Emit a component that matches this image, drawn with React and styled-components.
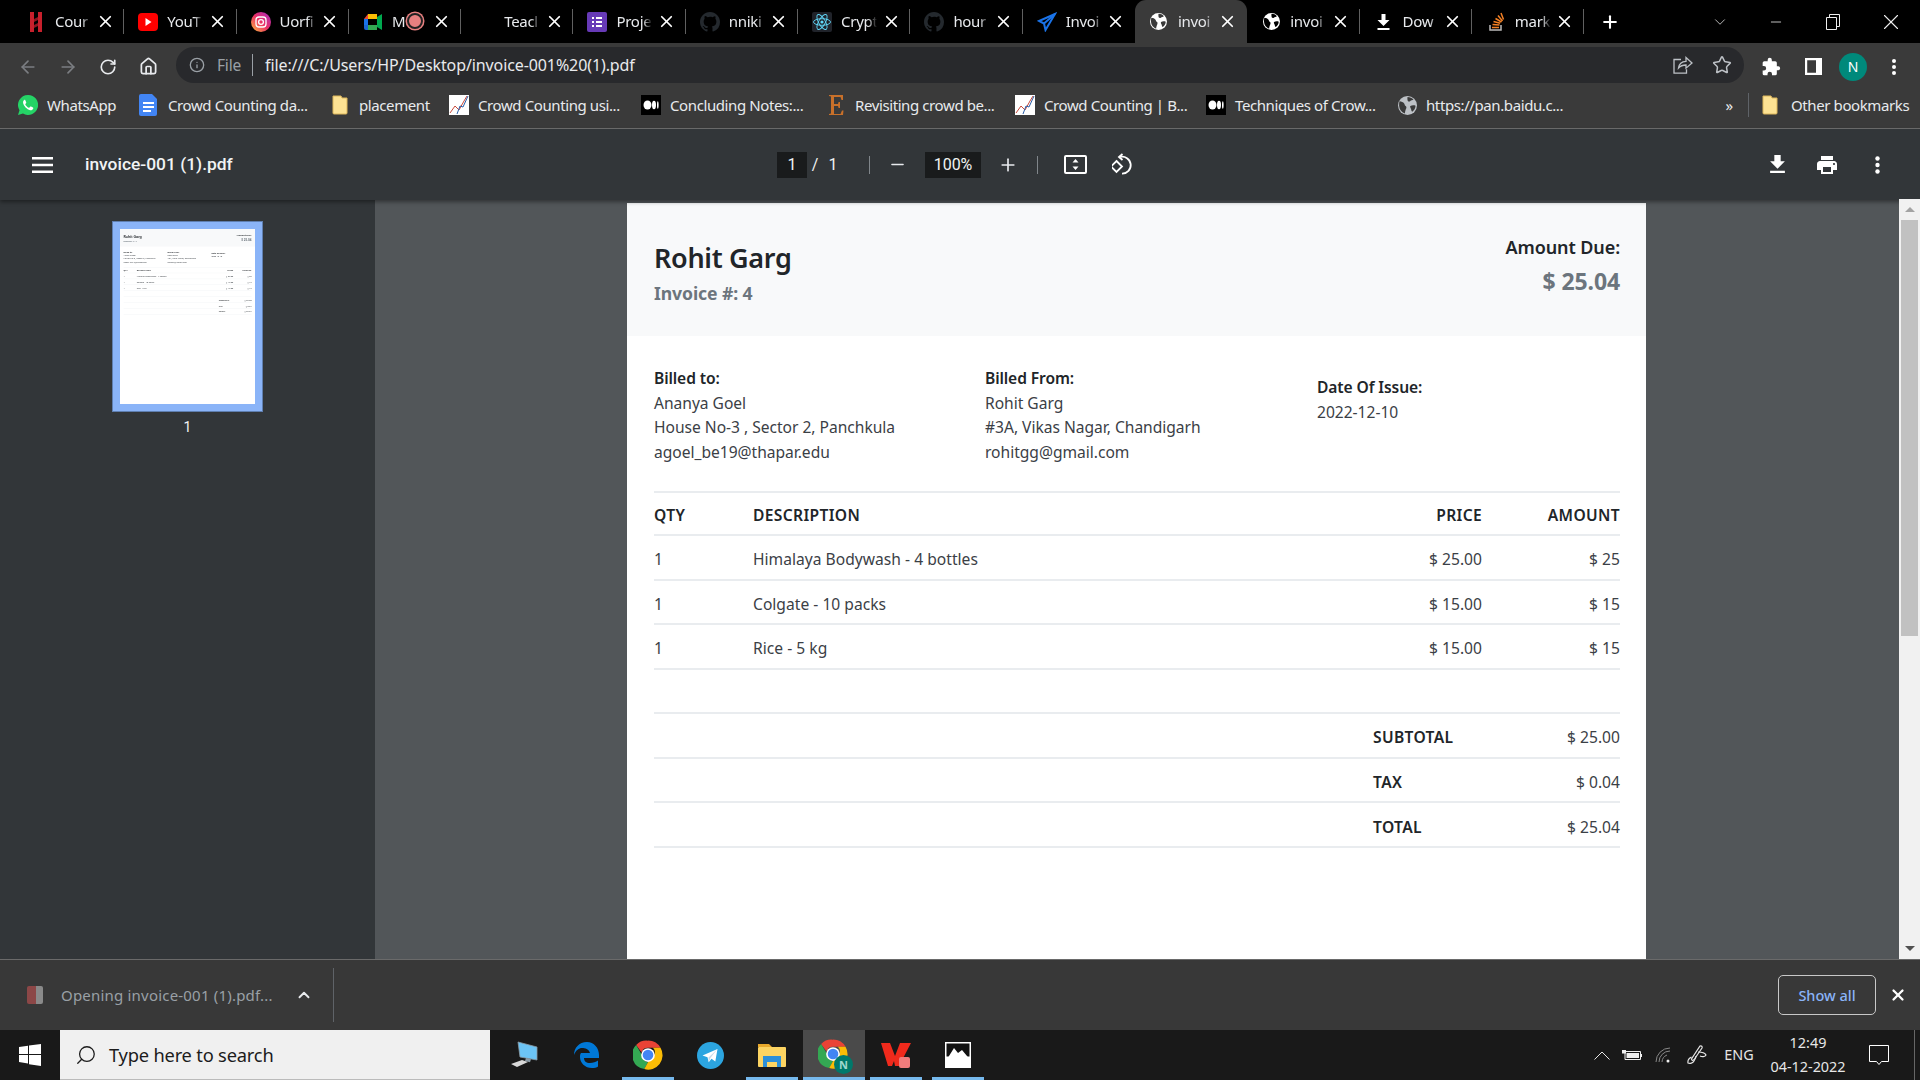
import React from "react";
import styled, { createGlobalStyle } from "styled-components";
import {
  ArrowLeft,
  ArrowRight,
  RotateCw,
  Home,
  Info,
  Star,
  Minus,
  Plus,
  ChevronUp,
  ChevronDown,
  Search,
  X,
} from "lucide-react";

const UI_FONT = `"Noto Sans", "Open Sans", Arial, sans-serif`;
const PDF_FONT = `Roboto, Arial, sans-serif`;

const GlobalStyle = createGlobalStyle`
  html, body { margin: 0; padding: 0; height: 100%; background: #000; overflow: hidden; }
  * { box-sizing: border-box; }
  body { font-family: ${UI_FONT}; }
`;

/* ---------- drawn icons ---------- */

const Globe = ({ size = 17, color = "#fff", land = "#3a3a3a" }) => (
  <svg width={size} height={size} viewBox="0 0 20 20">
    <circle cx="10" cy="10" r="10" fill={color} />
    <path d="M1.500 5.500c2.200.1 4 .9 5 2.300.8 1.100.4 1.900 1.500 2.600 1 .7 1.100 1.700.5 3-.5 1-1 2.600-1.300 5C3.500 17 1.500 14 1.200 10.500 1.100 8.700 1.200 7 1.500 5.500zM10 1c2.500 0 4.800 1 6.300 2.700-1.200.8-2.500.7-3.300 1.600-.8.900-2.100.7-2.600 0C9.900 4.500 9.800 2.700 10 1zM13 10.500c1.500-.8 3.800-.9 5.500-.3-.2 2.700-1.400 4.800-3.500 6.300-1.300-1-.9-2.700-1.700-3.700-.4-.8-.8-1.700-.3-2.300z" fill={land} />
  </svg>
);

const GitHubMark = ({ size = 19, color = "#24292e" }) => (
  <svg width={size} height={size} viewBox="0 0 16 16">
    <path fill={color} d="M8 0C3.580 0 0 3.580 0 8c0 3.540 2.290 6.530 5.470 7.590.4.070.55-.17.55-.38 0-.19-.010-.82-.010-1.490-2.010.370-2.530-.490-2.690-.940-.090-.230-.480-.940-.820-1.130-.280-.150-.680-.520-.010-.530.630-.010 1.080.580 1.230.820.720 1.210 1.870.870 2.330.660.070-.520.280-.870.510-1.070-1.780-.200-3.640-.890-3.640-3.950 0-.870.310-1.590.820-2.150-.080-.200-.360-1.020.080-2.120 0 0 .670-.210 2.200.820A7.600 7.600 0 0 1 8 3.870c.680 0 1.360.090 2 .270 1.530-1.040 2.200-.820 2.200-.820.440 1.100.160 1.920.080 2.120.510.560.820 1.270.820 2.150 0 3.070-1.870 3.750-3.650 3.950.290.250.540.730.540 1.480 0 1.070-.010 1.930-.010 2.200 0 .210.150.460.550.380A8.010 8.010 0 0 0 16 8c0-4.420-3.580-8-8-8z" />
  </svg>
);

const ChromeLogo = ({ size = 30 }) => (
  <svg width={size} height={size} viewBox="0 0 48 48">
    <path d="M24 1a23 23 0 0 1 20 11.500H24a11.500 11.500 0 0 0-10.500 7L5 7.800A23 23 0 0 1 24 1z" fill="#ea4335" />
    <path d="M5 7.800l9.800 17A10.500 10.500 0 0 0 24 35.500L18 46.500A23 23 0 0 1 5 7.800z" fill="#34a853" />
    <path d="M44 12.500a23 23 0 0 1-26 34l9-16.500A10.500 10.500 0 0 0 32 12.500z" fill="#fbbc05" />
    <circle cx="24" cy="24" r="11" fill="#fff" />
    <circle cx="24" cy="24" r="8.500" fill="#4285f4" />
  </svg>
);

const ReactLogo = () => (
  <svg width="20" height="20" viewBox="0 0 20 20">
    <rect width="20" height="20" rx="2" fill="#20232a" />
    <g fill="none" stroke="#61dafb" strokeWidth=".9">
      <ellipse cx="10" cy="10" rx="8.500" ry="3.300" />
      <ellipse cx="10" cy="10" rx="8.500" ry="3.300" transform="rotate(60 10 10)" />
      <ellipse cx="10" cy="10" rx="8.500" ry="3.300" transform="rotate(120 10 10)" />
    </g>
    <circle cx="10" cy="10" r="1.600" fill="#61dafb" />
  </svg>
);

const TabIcons = {
  hack: (
    <svg width="16" height="22" viewBox="0 0 16 22">
      <path d="M2 1h4v20H2zM10 1h4v20h-4z" fill="#c8202c" />
      <path d="M6 8l4-2v3L6 11zM6 14l4-2v3l-4 2z" fill="#8d1620" />
    </svg>
  ),
  youtube: (
    <svg width="20" height="20" viewBox="0 0 20 20">
      <rect y="1" width="20" height="18" rx="4" fill="#f00" />
      <path d="M7.500 6l6 4-6 4z" fill="#fff" />
    </svg>
  ),
  insta: (
    <svg width="20" height="20" viewBox="0 0 20 20">
      <defs>
        <linearGradient id="ig" x1="0" y1="1" x2="1" y2="0">
          <stop offset="0" stopColor="#fdc13b" />
          <stop offset=".5" stopColor="#ea2f66" />
          <stop offset="1" stopColor="#a22bc4" />
        </linearGradient>
      </defs>
      <circle cx="10" cy="10" r="10" fill="url(#ig)" />
      <rect x="5" y="5" width="10" height="10" rx="3" fill="none" stroke="#fff" strokeWidth="1.300" />
      <circle cx="10" cy="10" r="2.400" fill="none" stroke="#fff" strokeWidth="1.300" />
    </svg>
  ),
  meet: (
    <svg width="20" height="20" viewBox="0 0 20 20">
      <path d="M5 2h9v5H5z" fill="#fbbc04" />
      <path d="M1 7h4v6H1z" fill="#1a73e8" />
      <path d="M1 13h4v5H3a2 2 0 0 1-2-2z" fill="#1967d2" />
      <path d="M5 13h9v5H5z" fill="#34a853" />
      <path d="M14 5l5-3v16l-5-3z" fill="#00a94f" />
      <path d="M5 2v5H1z" fill="#ea4335" />
    </svg>
  ),
  forms: (
    <svg width="20" height="20" viewBox="0 0 20 20">
      <rect width="20" height="20" rx="2" fill="#673ab7" />
      <path d="M5 5h2v2H5zM9 5h6v2H9zM5 9h2v2H5zM9 9h6v2H9zM5 13h2v2H5zM9 13h6v2H9z" fill="#fff" />
    </svg>
  ),
  send: (
    <svg width="20" height="20" viewBox="0 0 20 20" fill="none" stroke="#1a73e8" strokeWidth="2">
      <path d="M18 2L2 9l5 2.500 1.500 6.500z" />
      <path d="M18 2L7 11.500" />
    </svg>
  ),
  down: (
    <svg width="13" height="16" viewBox="0 0 13 16">
      <path d="M4.500 0h4v6h4l-6 6-6-6h4zM.5 14h12v2H.5z" fill="#fff" />
    </svg>
  ),
  stack: (
    <svg width="18" height="20" viewBox="0 0 18 20" fill="none">
      <path d="M3 13v5h11v-5" stroke="#bcbbbb" strokeWidth="1.500" />
      <path d="M5 15.500h7M5.500 12.500l7 .6M6.500 9.500l6.700 1.800M8.500 6.500l6 3.500M11 3.500l4.500 5.500M14 1l2.500 6.500" stroke="#f48024" strokeWidth="1.500" />
    </svg>
  ),
};

const tabs = [
  { title: "Cour", icon: TabIcons.hack },
  { title: "YouT", icon: TabIcons.youtube },
  { title: "Uorfi", icon: TabIcons.insta },
  { title: "M", icon: TabIcons.meet, recording: true },
  { title: "Teacl" },
  { title: "Proje", icon: TabIcons.forms },
  { title: "nniki", icon: <GitHubMark size={20} /> },
  { title: "Crypt", icon: <ReactLogo /> },
  { title: "hour", icon: <GitHubMark size={20} /> },
  { title: "Invoi", icon: TabIcons.send },
  { title: "invoi", icon: <Globe />, active: true },
  { title: "invoi", icon: <Globe land="#000" /> },
  { title: "Dow", icon: TabIcons.down },
  { title: "mark", icon: TabIcons.stack },
];

const DocIcon = () => (
  <svg width="20" height="22" viewBox="0 0 20 22">
    <path d="M2 0h11l5 5v15a2 2 0 0 1-2 2H2a2 2 0 0 1-2-2V2a2 2 0 0 1 2-2z" fill="#4285f4" />
    <path d="M4 8h11v2H4zM4 12h11v2H4zM4 16h8v2H4z" fill="#fff" />
  </svg>
);
const FolderIcon = () => (
  <svg width="16" height="20" viewBox="0 0 16 20">
    <path d="M1 1h8l1 2h5v15a1 1 0 0 1-1 1H2a1 1 0 0 1-1-1z" fill="#fde293" stroke="#dcb65a" />
  </svg>
);
const ChartIcon = () => (
  <svg width="20" height="20" viewBox="0 0 20 20">
    <rect width="20" height="20" fill="#fff" />
    <path d="M1 18l5-7 4 4 5-9 3-5" fill="none" stroke="#c94a3a" strokeWidth="1" />
    <path d="M8 19l3-8 3 1 5-11" fill="none" stroke="#2a5ea8" strokeWidth="1" />
  </svg>
);
const MediumIcon = () => (
  <svg width="20" height="20" viewBox="0 0 20 20">
    <rect width="20" height="20" fill="#000" />
    <ellipse cx="6.500" cy="10" rx="4" ry="4.500" fill="#fff" />
    <ellipse cx="13" cy="10" rx="2" ry="4.200" fill="#fff" />
    <ellipse cx="16.800" cy="10" rx=".8" ry="3.800" fill="#fff" />
  </svg>
);
const WhatsAppIcon = () => (
  <svg width="20" height="20" viewBox="0 0 20 20">
    <path d="M10 0a10 10 0 0 0-8.500 15.200L0 20l5-1.400A10 10 0 1 0 10 0z" fill="#25d366" />
    <path d="M6.500 4.800c-.8.500-1.700 1.600-1.400 3.200.5 2.800 3.800 6.500 7 7.200 1.500.3 2.700-.5 3.100-1.500.2-.6.100-1-.2-1.200l-2-1c-.4-.2-.7-.1-.9.200l-.8 1c-.2.200-.4.200-.7.100-1.300-.6-2.700-1.900-3.300-3.200-.1-.3-.1-.5.100-.7l.7-.8c.2-.3.200-.5.100-.8l-.9-2.100c-.2-.4-.5-.5-.8-.4z" fill="#fff" />
  </svg>
);
const SerifEIcon = () => (
  <svg width="20" height="22" viewBox="0 0 20 22">
    <path d="M3 1h14v5h-1.500l-1-3H8v7h4l.6-2H14v6h-1.400l-.6-2H8v8h6.500l1.500-3.500h1.500L17 21H3v-1l2-.5v-17L3 2z" fill="#c8702a" />
  </svg>
);

const bookmarks = [
  { w: 121, label: "WhatsApp", icon: <WhatsAppIcon /> },
  { w: 191, label: "Crowd Counting da...", icon: <DocIcon /> },
  { w: 119, label: "placement", icon: <FolderIcon /> },
  { w: 192, label: "Crowd Counting usi...", icon: <ChartIcon /> },
  { w: 185, label: "Concluding Notes:...", icon: <MediumIcon /> },
  { w: 189, label: "Revisiting crowd be...", icon: <SerifEIcon /> },
  { w: 191, label: "Crowd Counting | B...", icon: <ChartIcon /> },
  { w: 191, label: "Techniques of Crow...", icon: <MediumIcon /> },
  { w: 300, label: "https://pan.baidu.c...", icon: <Globe size={19} color="#bdc1c6" /> },
];

const PcIcon = () => (
  <svg width="30" height="28" viewBox="0 0 30 28">
    <path d="M9 1l19 5v13L11 16z" fill="#6cc4f5" stroke="#8a9aa5" strokeWidth=".8" />
    <path d="M17 17l5 1.300-1 3-5-1.300z" fill="#8a9aa5" />
    <path d="M2 23l11-4 6 2-11 5z" fill="#d8d8d8" />
  </svg>
);
const EdgeIcon = () => (
  <svg width="25" height="26" viewBox="0 0 25 26">
    <path d="M13 0C5 0 0 6 0 13c2-5 5-7 8-7s7 1 8 5H7c-1 1-1 3-1 4 0 6 5 11 12 11 2 0 5-.5 6-1.500v-6c-2 1.500-5 2.500-8 2.500-4 0-6-2-6-5h15v-3C25 6 20 0 13 0z" fill="#0078d7" />
  </svg>
);
const TelegramIcon = () => (
  <svg width="27" height="27" viewBox="0 0 27 27">
    <circle cx="13.500" cy="13.500" r="13.500" fill="#2ca5e0" />
    <path d="M20.500 7L5.500 13.500l5 1.800 1.200 5 2.800-3.500 3.800 2.700z" fill="#fff" />
    <path d="M20.500 7l-9 8.500.3 4.500 1.600-4z" fill="#c8daea" />
  </svg>
);
const ExplorerIcon = () => (
  <svg width="28" height="24" viewBox="0 0 28 24">
    <path d="M0 1h11l3 3H0z" fill="#e8a92c" />
    <rect y="4" width="28" height="20" rx="1" fill="#fcd462" />
    <path d="M5 13h18v11h-4v-5H9v5H5z" fill="#2b8fd8" />
  </svg>
);
const WpsIcon = () => (
  <svg width="30" height="27" viewBox="0 0 30 27">
    <path d="M0 1h9l5 13L19 1h11L18 24h-4l-1-5-2 5H7z" fill="#f02a1c" />
    <rect x="18" y="15" width="11" height="11" rx="2" fill="#f07c7c" />
  </svg>
);
const PhotosIcon = () => (
  <svg width="26" height="26" viewBox="0 0 26 26">
    <rect width="26" height="26" fill="#fff" />
    <rect x="1.500" y="1.500" width="23" height="13" fill="#111" />
    <path d="M1.500 18L9 6l4 5 4-3 7.500 9v7.500h-23z" fill="#fff" />
  </svg>
);

const BadgedChrome = styled.div`
  position: relative;
  width: 32px;
  height: 32px;
`;

const ProfileBadge = styled.div`
  position: absolute;
  right: -3px;
  bottom: -3px;
  width: 19px;
  height: 19px;
  border-radius: 50%;
  background: #00796b;
  color: #9ed8cf;
  font-size: 11px;
  font-weight: 700;
  display: flex;
  align-items: center;
  justify-content: center;
`;

const taskApps = [
  { icon: <PcIcon /> },
  { icon: <EdgeIcon /> },
  { icon: <ChromeLogo />, running: true },
  { icon: <TelegramIcon /> },
  { icon: <ExplorerIcon />, running: true },
  {
    icon: (
      <BadgedChrome>
        <ChromeLogo />
        <ProfileBadge>N</ProfileBadge>
      </BadgedChrome>
    ),
    active: true,
  },
  { icon: <WpsIcon />, running: true },
  { icon: <PhotosIcon />, running: true },
];

/* ---------- browser chrome ---------- */

const Screen = styled.div`
  width: 1920px;
  height: 1080px;
  display: flex;
  flex-direction: column;
  overflow: hidden;
  background: #000;
`;

const TabStrip = styled.div`
  height: 43px;
  flex: none;
  display: flex;
  align-items: stretch;
  padding-left: 12px;
  background: #000;
`;

const Tab = styled.div`
  position: relative;
  flex: 0 0 112.3px;
  display: flex;
  align-items: center;
  height: 43px;
  color: #e8eaed;
  background: ${(p) => (p.$active ? "#3a3a3a" : "transparent")};
  border-radius: ${(p) => (p.$active ? "11px 11px 0 0" : "0")};
  &::after {
    content: "";
    display: ${(p) => (p.$plain ? "none" : "block")};
    position: absolute;
    right: 0;
    top: 9px;
    height: 25px;
    width: 1px;
    background: #606060;
  }
`;

const TabFavicon = styled.div`
  flex: 0 0 20px;
  height: 22px;
  margin-left: 14px;
  display: flex;
  align-items: center;
  justify-content: center;
`;

const TabTitle = styled.div`
  margin-left: 9px;
  margin-bottom: 2px;
  width: 36px;
  flex: none;
  overflow: hidden;
  white-space: nowrap;
  font-size: 15px;
  letter-spacing: -0.3px;
  -webkit-mask-image: linear-gradient(90deg, #000 75%, transparent);
  mask-image: linear-gradient(90deg, #000 75%, transparent);
`;

const RecDot = styled.div`
  position: absolute;
  left: 58px;
  top: 13px;
  width: 16px;
  height: 16px;
  border-radius: 50%;
  background: #e88080;
  border: 2px solid #222;
  box-shadow: 0 0 0 1.500px #e88080;
`;

const TabClose = styled.div`
  position: absolute;
  right: 9.800px;
  top: 12px;
  display: flex;
  color: #fff;
`;

const NewTab = styled.div`
  flex: none;
  width: 52px;
  display: flex;
  align-items: center;
  justify-content: center;
  color: #fff;
`;

const WindowControls = styled.div`
  margin-left: auto;
  display: flex;
  align-items: center;
  color: #eee;
`;

const WinButton = styled.div`
  width: ${(p) => p.$w}px;
  height: 38px;
  display: flex;
  align-items: center;
  justify-content: center;
`;

const TabListButton = styled.div`
  display: flex;
  margin-right: 18px;
`;

const AddressBar = styled.div`
  height: 47px;
  flex: none;
  display: flex;
  align-items: center;
  padding-left: 8px;
  background: #3a3a3a;
`;

const ToolSlot = styled.div`
  flex: 0 0 ${(p) => p.$w || 40}px;
  margin-left: ${(p) => p.$ml || 0}px;
  display: flex;
  align-items: center;
  justify-content: center;
  color: ${(p) => p.$color || "#e8eaed"};
`;

const Omnibox = styled.div`
  margin-left: 8px;
  width: 1568px;
  height: 36px;
  margin-top: -4px;
  display: flex;
  align-items: center;
  padding-left: 12px;
  border-radius: 18px;
  background: #28292c;
`;

const SchemeLabel = styled.div`
  margin-left: 11px;
  width: 35px;
  color: #9aa0a6;
  font-size: 15.500px;
  letter-spacing: -0.2px;
`;

const UrlText = styled.div`
  flex: 1;
  padding-left: 12px;
  border-left: 1px solid #9aa0a6;
  height: 22px;
  line-height: 22px;
  color: #e8eaed;
  font-size: 16px;
  letter-spacing: -0.1px;
  white-space: nowrap;
`;

const OmniActions = styled.div`
  display: flex;
  align-items: center;
  margin-right: 3px;
`;

const Avatar = styled.div`
  width: 28px;
  height: 28px;
  border-radius: 50%;
  background: #00897b;
  color: #fff;
  font-size: 14px;
  display: flex;
  align-items: center;
  justify-content: center;
`;

const BookmarkBar = styled.div`
  height: 39px;
  flex: none;
  display: flex;
  align-items: center;
  padding: 0 0 8px 18px;
  background: #3a3a3a;
  border-bottom: 1px solid #6e6e6e;
`;

const Bookmark = styled.div`
  flex: 0 0 ${(p) => p.$w}px;
  display: flex;
  align-items: center;
  gap: 9px;
  color: #e8eaed;
  font-size: 15px;
  letter-spacing: -0.4px;
  white-space: nowrap;
`;

const BookmarkIcon = styled.div`
  flex: 0 0 20px;
  height: 22px;
  display: flex;
  align-items: center;
  justify-content: center;
`;

const BookmarkEnd = styled.div`
  margin-left: auto;
  display: flex;
  align-items: center;
  color: #e8eaed;
  font-size: 15px;
  letter-spacing: -0.4px;
`;

const Chevrons = styled.div`
  width: 24px;
  text-align: center;
  margin-right: 7px;
`;

const BarDivider = styled.div`
  width: 1px;
  height: 24px;
  background: #5f6368;
  margin-right: 13px;
`;

const OtherBookmarks = styled.div`
  display: flex;
  align-items: center;
  gap: 13px;
  width: 158px;
  white-space: nowrap;
`;

/* ---------- pdf viewer ---------- */

const PdfToolbar = styled.div`
  height: 71px;
  flex: none;
  display: flex;
  align-items: center;
  background: #323639;
  color: #f1f3f4;
  font-family: ${PDF_FONT};
  box-shadow: 0 2px 4px rgba(0, 0, 0, 0.4);
  position: relative;
  z-index: 2;
`;

const MenuSlot = styled.div`
  flex: 0 0 85px;
  display: flex;
  justify-content: center;
`;

const DocTitle = styled.div`
  flex: 0 0 692px;
  margin-bottom: 2px;
  font-size: 17.400px;
  font-weight: 500;
`;

const NumberBox = styled.div`
  width: ${(p) => p.$w}px;
  height: 26px;
  margin-left: ${(p) => p.$ml || 0}px;
  flex: none;
  background: #191b1c;
  display: flex;
  align-items: center;
  justify-content: center;
  font-size: 16px;
`;

const PlainNum = styled.div`
  width: ${(p) => p.$w}px;
  flex: none;
  text-align: center;
  font-size: 16px;
`;

const ToolDivider = styled.div`
  flex: none;
  width: 1px;
  height: 18px;
  margin-left: ${(p) => p.$ml}px;
  background: #80868b;
`;

const RightTools = styled.div`
  margin-left: auto;
  margin-right: 18px;
  display: flex;
  align-items: center;
`;

const Workspace = styled.div`
  flex: 1;
  min-height: 0;
  display: flex;
`;

const Sidebar = styled.div`
  flex: 0 0 375px;
  background: #323639;
  display: flex;
  flex-direction: column;
  align-items: center;
  padding-top: 21px;
  color: #f1f3f4;
  font-family: ${PDF_FONT};
`;

const ThumbFrame = styled.div`
  width: 151px;
  height: 191px;
  padding: 8px;
  background: #8ab4f8;
  box-shadow: 0 0 0 1px #5f7fb0 inset;
  overflow: hidden;
`;

const ThumbPage = styled.div`
  width: 135px;
  height: 175px;
  background: #fff;
  overflow: hidden;
`;

const ThumbScale = styled.div`
  width: 1019px;
  transform: scale(0.1325);
  transform-origin: top left;
`;

const ThumbLabel = styled.div`
  margin-top: 7px;
  font-size: 14px;
  line-height: 16px;
`;

const Viewer = styled.div`
  flex: 1;
  min-width: 0;
  display: flex;
  justify-content: center;
  padding: 3px 1px 0 0;
  overflow: hidden;
  background: #525659;
`;

const Page = styled.div`
  width: 1019px;
  height: 1320px;
  flex: none;
  background: #fff;
  color: #212529;
  font-family: ${UI_FONT};
  font-size: 15.600px;
  line-height: 24.600px;
`;

const InvoiceHead = styled.div`
  height: 133px;
  display: flex;
  justify-content: space-between;
  padding: 32px 26px 0 27px;
  background: #f8f9fa;
`;

const CustomerName = styled.div`
  margin-top: 6px;
  font-size: 27px;
  font-weight: 600;
  line-height: 34px;
  letter-spacing: -0.3px;
`;

const MutedStrong = styled.div`
  margin-top: ${(p) => p.$mt || 0}px;
  color: #6c757d;
  font-weight: 700;
  font-size: ${(p) => p.$size || 15.6}px;
  letter-spacing: -0.1px;
`;

const AmountBox = styled.div`
  text-align: right;
`;

const AmountLabel = styled.div`
  font-size: 18px;
  font-weight: 600;
  letter-spacing: -0.1px;
`;

const Strong = styled.div`
  font-weight: 600;
  letter-spacing: -0.1px;
`;

const InfoGrid = styled.div`
  display: grid;
  grid-template-columns: 331px 332px 1fr;
  padding: 30px 27px 0;
  height: 155px;
`;

const InfoColumn = styled.div`
  padding-top: ${(p) => p.$pt || 0}px;
`;

const Muted = styled.div`
  color: #3b4046;
  letter-spacing: -0.02px;
`;

const Table = styled.div`
  margin: 0 26px 0 27px;
  border-top: 2px solid #e9ecef;
`;

const Row = styled.div`
  display: grid;
  grid-template-columns: 99px 1fr 110px 138px;
  align-items: center;
  height: ${(p) => p.$h || 44.6}px;
  padding-top: 4px;
  border-bottom: 2px solid #e9ecef;
  font-weight: ${(p) => (p.$head ? 600 : 400)};
  color: ${(p) => (p.$head ? "#212529" : "#3b4046")};
  letter-spacing: ${(p) => (p.$head ? "0.35px" : "0.02px")};
`;

const RightCell = styled.div`
  text-align: right;
`;

const TotalRow = styled.div`
  display: grid;
  grid-template-columns: 719px 1fr auto;
  align-items: center;
  height: 44.800px;
  padding-top: 5px;
  border-bottom: 2px solid #e9ecef;
  color: #3b4046;
  letter-spacing: 0.02px;
`;

const TotalLabel = styled.div`
  grid-column: 2;
  font-weight: 600;
  color: #212529;
  letter-spacing: 0.35px;
`;

const Scrollbar = styled.div`
  flex: 0 0 21px;
  display: flex;
  flex-direction: column;
  align-items: center;
  background: #f1f1f1;
  position: relative;
  z-index: 3;
  margin-top: -1px;
`;

const ScrollArrow = styled.div`
  flex: none;
  height: 21px;
  display: flex;
  align-items: center;
  justify-content: center;
  margin-top: ${(p) => (p.$end ? "auto" : 0)};
`;

const Triangle = styled.div`
  width: 0;
  height: 0;
  border-left: 5px solid transparent;
  border-right: 5px solid transparent;
  ${(p) => (p.$down ? "border-top: 5px solid #505050;" : "border-bottom: 5px solid #a3a3a3;")}
`;

const ScrollThumb = styled.div`
  width: 17px;
  height: 416px;
  flex: none;
  background: #c1c1c1;
`;

/* ---------- shelf + taskbar ---------- */

const Shelf = styled.div`
  height: 71px;
  flex: none;
  display: flex;
  align-items: center;
  background: #383838;
  border-top: 1px solid #6a6a6a;
  padding-left: 27px;
`;

const ShelfFile = styled.div`
  flex: 0 0 16px;
  height: 18px;
  border-radius: 2px;
  background: linear-gradient(90deg, #8c4747 55%, #8a8a8a 55%);
`;

const ShelfText = styled.div`
  margin-left: 18px;
  width: 233px;
  color: #9aa0a6;
  font-size: 15px;
  letter-spacing: 0.2px;
  white-space: nowrap;
`;

const ShelfDivider = styled.div`
  margin-left: 19px;
  width: 1px;
  height: 54px;
  background: #5f6368;
`;

const ShowAll = styled.button`
  margin-left: auto;
  width: 98px;
  height: 40px;
  border: 1px solid #c8c8c8;
  border-radius: 5px;
  background: transparent;
  color: #8ab4f8;
  font-family: ${UI_FONT};
  font-size: 14.500px;
  font-weight: 500;
  padding: 0;
`;

const ShelfClose = styled.div`
  flex: 0 0 44px;
  display: flex;
  justify-content: center;
  color: #fff;
`;

const Taskbar = styled.div`
  height: 50px;
  flex: none;
  display: flex;
  align-items: stretch;
  background: #191919;
`;

const StartButton = styled.div`
  flex: 0 0 60px;
  display: flex;
  align-items: center;
  justify-content: center;
`;

const SearchBox = styled.div`
  flex: 0 0 430px;
  display: flex;
  align-items: center;
  padding-left: 15px;
  background: #f0f0f0;
  color: #1c1c1c;
  border-bottom: 1px solid #bbb;
  font-size: 18.300px;
  letter-spacing: -0.2px;
`;

const SearchGlass = styled(Search)`
  transform: scaleX(-1);
`;

const SearchText = styled.span`
  margin-left: 12px;
`;

const TaskApps = styled.div`
  display: flex;
  margin-left: 3px;
`;

const TaskApp = styled.div`
  position: relative;
  flex: 0 0 62px;
  display: flex;
  align-items: center;
  justify-content: center;
  background: ${(p) => (p.$active ? "#4a4a4a" : "transparent")};
  &::after {
    content: "";
    position: absolute;
    bottom: 0;
    height: 3px;
    width: ${(p) => (p.$active ? "100%" : "52px")};
    background: ${(p) => (p.$active || p.$running ? "#76b9ed" : "transparent")};
  }
`;

const Tray = styled.div`
  margin-left: auto;
  display: flex;
  align-items: center;
  color: #e6e6e6;
`;

const TraySlot = styled.div`
  flex: 0 0 ${(p) => p.$w}px;
  width: ${(p) => p.$w}px;
  display: flex;
  flex-direction: column;
  align-items: center;
  justify-content: center;
  font-size: 14.400px;
  line-height: 24px;
`;

const DesktopEdge = styled.div`
  width: 15px;
  height: 50px;
  background: linear-gradient(90deg, transparent 9px, #666 9px, #666 10px, transparent 10px);
`;

/* ---------- invoice ---------- */

const items = [
  { qty: 1, name: "Himalaya Bodywash - 4 bottles", price: "$ 25.00", amount: "$ 25" },
  { qty: 1, name: "Colgate - 10 packs", price: "$ 15.00", amount: "$ 15" },
  { qty: 1, name: "Rice - 5 kg", price: "$ 15.00", amount: "$ 15" },
];

const totals = [
  { label: "SUBTOTAL", value: "$ 25.00" },
  { label: "TAX", value: "$ 0.04" },
  { label: "TOTAL", value: "$ 25.04" },
];

const Invoice = () => (
  <Page>
    <InvoiceHead>
      <div>
        <CustomerName>Rohit Garg</CustomerName>
        <MutedStrong $mt={6} $size={17.6}>Invoice #: 4</MutedStrong>
      </div>
      <AmountBox>
        <AmountLabel>Amount Due:</AmountLabel>
        <MutedStrong $mt={9} $size={23}>$ 25.04</MutedStrong>
      </AmountBox>
    </InvoiceHead>
    <InfoGrid>
      <InfoColumn>
        <Strong>Billed to:</Strong>
        <Muted>Ananya Goel</Muted>
        <Muted>House No-3 , Sector 2, Panchkula</Muted>
        <Muted>agoel_be19@thapar.edu</Muted>
      </InfoColumn>
      <InfoColumn>
        <Strong>Billed From:</Strong>
        <Muted>Rohit Garg</Muted>
        <Muted>#3A, Vikas Nagar, Chandigarh</Muted>
        <Muted>rohitgg@gmail.com</Muted>
      </InfoColumn>
      <InfoColumn $pt={9}>
        <Strong>Date Of Issue:</Strong>
        <Muted>2022-12-10</Muted>
      </InfoColumn>
    </InfoGrid>
    <Table>
      <Row $head $h={43}>
        <div>QTY</div>
        <div>DESCRIPTION</div>
        <RightCell>PRICE</RightCell>
        <RightCell>AMOUNT</RightCell>
      </Row>
      {items.map((item) => (
        <Row key={item.name}>
          <div>{item.qty}</div>
          <div>{item.name}</div>
          <RightCell>{item.price}</RightCell>
          <RightCell>{item.amount}</RightCell>
        </Row>
      ))}
      <Row $h={44} />
      {totals.map((t) => (
        <TotalRow key={t.label}>
          <TotalLabel>{t.label}</TotalLabel>
          <RightCell>{t.value}</RightCell>
        </TotalRow>
      ))}
    </Table>
  </Page>
);

const App = () => {
  return (
    <Screen>
      <GlobalStyle />

      <TabStrip>
        {tabs.map((tab, i) => (
          <Tab key={i} $active={tab.active} $plain={tab.active || tabs[i + 1]?.active}>
            <TabFavicon>{tab.icon}</TabFavicon>
            <TabTitle>{tab.title}</TabTitle>
            {tab.recording && <RecDot />}
            <TabClose>
              <X size={19} strokeWidth={2.200} />
            </TabClose>
          </Tab>
        ))}
        <NewTab>
          <Plus size={20} strokeWidth={2.500} />
        </NewTab>
        <WindowControls>
          <TabListButton>
            <ChevronDown size={18} strokeWidth={1} />
          </TabListButton>
          <WinButton $w={57}>
            <Minus size={16} strokeWidth={1.200} />
          </WinButton>
          <WinButton $w={58}>
            <svg width="14" height="16" viewBox="0 0 14 16" fill="none" stroke="#eee">
              <path d="M.5 3.500h10v12H.5zM3.500 3.500v-3h10v12h-3" />
            </svg>
          </WinButton>
          <WinButton $w={58}>
            <X size={26} strokeWidth={1} />
          </WinButton>
        </WindowControls>
      </TabStrip>

      <AddressBar>
        <ToolSlot $color="#7b7e82"><ArrowLeft size={20} /></ToolSlot>
        <ToolSlot $color="#7b7e82"><ArrowRight size={20} /></ToolSlot>
        <ToolSlot><RotateCw size={18} strokeWidth={2.200} /></ToolSlot>
        <ToolSlot><Home size={19} strokeWidth={2.200} /></ToolSlot>
        <Omnibox>
          <ToolSlot $w={18} $color="#9aa0a6"><Info size={16} /></ToolSlot>
          <SchemeLabel>File</SchemeLabel>
          <UrlText>file:///C:/Users/HP/Desktop/invoice-001%20(1).pdf</UrlText>
          <OmniActions>
            <ToolSlot $w={39}>
              <svg width="20" height="18" viewBox="0 0 20 18" fill="none" stroke="#bdc1c6" strokeWidth="1.300">
                <path d="M8 3.500H1v13.700h12.500v-4" />
                <path d="M5.500 12c.5-4 3.500-6.500 7.500-6.700V1.500l6 5.500-6 5.200V9c-3 0-5.500.8-7.500 3z" />
              </svg>
            </ToolSlot>
            <ToolSlot $w={39} $color="#bdc1c6"><Star size={20} strokeWidth={1.800} /></ToolSlot>
          </OmniActions>
        </Omnibox>
        <ToolSlot $w={46} $ml={4}>
          <svg width="20" height="20" viewBox="0 0 24 24" fill="#fff">
            <path d="M20.500 11H19V7a2 2 0 0 0-2-2h-4V3.500a2.500 2.500 0 0 0-5 0V5H4a2 2 0 0 0-2 2v3.800h1.500a2.700 2.700 0 0 1 0 5.400H2V20a2 2 0 0 0 2 2h3.800v-1.500a2.700 2.700 0 0 1 5.400 0V22H17a2 2 0 0 0 2-2v-4h1.500a2.500 2.500 0 0 0 0-5z" />
          </svg>
        </ToolSlot>
        <ToolSlot $w={38}>
          <svg width="17" height="17" viewBox="0 0 17 17" fill="#fff">
            <path d="M0 0h17v17H0zM2.200 2.200v12.600h8.800V2.200z" fillRule="evenodd" />
          </svg>
        </ToolSlot>
        <ToolSlot $w={42}><Avatar>N</Avatar></ToolSlot>
        <ToolSlot $w={40}>
          <svg width="4" height="16" viewBox="0 0 4 16" fill="#fff">
            <circle cx="2" cy="2" r="2" /><circle cx="2" cy="8" r="2" /><circle cx="2" cy="14" r="2" />
          </svg>
        </ToolSlot>
      </AddressBar>

      <BookmarkBar>
        {bookmarks.map((b, i) => (
          <Bookmark key={i} $w={b.w}>
            <BookmarkIcon>{b.icon}</BookmarkIcon>
            {b.label}
          </Bookmark>
        ))}
        <BookmarkEnd>
          <Chevrons>»</Chevrons>
          <BarDivider />
          <OtherBookmarks>
            <FolderIcon />
            Other bookmarks
          </OtherBookmarks>
        </BookmarkEnd>
      </BookmarkBar>

      <PdfToolbar>
        <MenuSlot>
          <svg width="21" height="16" viewBox="0 0 21 16" fill="#fff">
            <path d="M0 0h21v2.400H0zM0 6.800h21v2.400H0zM0 13.600h21V16H0z" />
          </svg>
        </MenuSlot>
        <DocTitle>invoice-001 (1).pdf</DocTitle>
        <NumberBox $w={30}>1</NumberBox>
        <PlainNum $w={16}>/</PlainNum>
        <PlainNum $w={20}>1</PlainNum>
        <ToolDivider $ml={26} />
        <ToolSlot $w={54}><Minus size={19} strokeWidth={2} /></ToolSlot>
        <NumberBox $w={56} $ml={1}>100%</NumberBox>
        <ToolSlot $w={54}><Plus size={20} strokeWidth={2} /></ToolSlot>
        <ToolDivider $ml={2} />
        <ToolSlot $w={74}>
          <svg width="23" height="19" viewBox="0 0 23 19" fill="none">
            <rect x="1" y="1" width="21" height="17" rx="1" stroke="#fff" strokeWidth="2" />
            <path d="M11.500 4l3 3.500h-6zM11.500 15l3-3.500h-6z" fill="#fff" />
          </svg>
        </ToolSlot>
        <ToolSlot $w={16}>
          <svg width="24" height="24" viewBox="3 0 24 24" fill="none" stroke="#fff" strokeWidth="1.800">
            <path d="M7.500 8l5.500 5.500L7.500 19 2 13.500z" />
            <path d="M11 4a8.500 8.500 0 1 1 2 16.700" />
            <path d="M13.500 1L10 4l3.500 3" />
          </svg>
        </ToolSlot>
        <RightTools>
          <ToolSlot $w={50}>
            <svg width="19" height="19" viewBox="3 3 18 18" fill="#fff">
              <path d="M19 9h-4V3H9v6H5l7 7 7-7zM5 18v2h14v-2H5z" />
            </svg>
          </ToolSlot>
          <ToolSlot $w={50}>
            <svg width="24" height="24" viewBox="0 0 24 24" fill="#fff">
              <path d="M19 8H5c-1.660 0-3 1.340-3 3v6h4v4h12v-4h4v-6c0-1.660-1.340-3-3-3zm-3 11H8v-5h8v5zm3-7c-.55 0-1-.45-1-1s.45-1 1-1 1 .45 1 1-.45 1-1 1zm-1-9H6v4h12V3z" />
            </svg>
          </ToolSlot>
          <ToolSlot $w={50}>
            <svg width="5" height="18" viewBox="0 0 5 18" fill="#fff">
              <circle cx="2.500" cy="2.500" r="2.200" /><circle cx="2.500" cy="9" r="2.200" /><circle cx="2.500" cy="15.500" r="2.200" />
            </svg>
          </ToolSlot>
        </RightTools>
      </PdfToolbar>

      <Workspace>
        <Sidebar>
          <ThumbFrame>
            <ThumbPage>
              <ThumbScale>
                <Invoice />
              </ThumbScale>
            </ThumbPage>
          </ThumbFrame>
          <ThumbLabel>1</ThumbLabel>
        </Sidebar>
        <Viewer>
          <Invoice />
        </Viewer>
        <Scrollbar>
          <ScrollArrow><Triangle /></ScrollArrow>
          <ScrollThumb />
          <ScrollArrow $end><Triangle $down /></ScrollArrow>
        </Scrollbar>
      </Workspace>

      <Shelf>
        <ShelfFile />
        <ShelfText>Opening invoice-001 (1).pdf...</ShelfText>
        <ToolSlot $w={20}><ChevronUp size={18} strokeWidth={2.500} /></ToolSlot>
        <ShelfDivider />
        <ShowAll>Show all</ShowAll>
        <ShelfClose><X size={18} strokeWidth={3} /></ShelfClose>
      </Shelf>

      <Taskbar>
        <StartButton>
          <svg width="22" height="22" viewBox="0 0 22 22" fill="#fff">
            <path d="M0 3l9-1.300V10H0zM10 1.500L22 0v10H10zM0 11h9v8.500L0 18zM10 11h12v11l-12-1.700z" />
          </svg>
        </StartButton>
        <SearchBox>
          <SearchGlass size={22} strokeWidth={1.400} />
          <SearchText>Type here to search</SearchText>
        </SearchBox>
        <TaskApps>
          {taskApps.map((app, i) => (
            <TaskApp key={i} $active={app.active} $running={app.running}>
              {app.icon}
            </TaskApp>
          ))}
        </TaskApps>
        <Tray>
          <TraySlot $w={30}>
            <svg width="16" height="9" viewBox="0 0 16 9" fill="none" stroke="#e6e6e6"><path d="M.5 8.500L8 1l7.500 7.500" /></svg>
          </TraySlot>
          <TraySlot $w={30}>
            <svg width="20" height="13" viewBox="0 0 20 13" fill="none" stroke="#f0f0f0">
              <path d="M3 2.500h15.500v8H3z" />
              <path d="M4.500 4h12.500v5H4.500zM0 1h4v3.500H0z" fill="#f0f0f0" stroke="none" />
              <path d="M19 5h1v3h-1z" fill="#f0f0f0" stroke="none" />
            </svg>
          </TraySlot>
          <TraySlot $w={32}>
            <svg width="16" height="16" viewBox="0 0 16 16" fill="none" stroke="#888">
              <path d="M1 15a14 14 0 0 1 14-14M4 15a11 11 0 0 1 11-11M7 15a8 8 0 0 1 5-7" />
              <circle cx="13" cy="14" r="1.500" fill="#eee" stroke="none" />
            </svg>
          </TraySlot>
          <TraySlot $w={36}>
            <svg width="20" height="20" viewBox="0 0 20 20" fill="none" stroke="#e6e6e6" strokeWidth="1.200">
              <path d="M13 1c1.500-.5 2.500.5 2 2L7.500 14c-1.500 2-3 1.500-3 0z" />
              <path d="M4.500 12C2.500 13 .5 15 1 18c2 1 5 0 6-2 1-1.500 2-3 2-5M11 7c3 0 7 1 8 3-1 2-4 2-6 1" />
            </svg>
          </TraySlot>
          <TraySlot $w={48}>ENG</TraySlot>
          <TraySlot $w={90}>
            <div>12:49</div>
            <div>04-12-2022</div>
          </TraySlot>
          <TraySlot $w={52}>
            <svg width="20" height="20" viewBox="0 0 20 20" fill="none" stroke="#fff"><path d="M.5.500h19v16h-7l-2.500 3-2.500-3h-7z" /></svg>
          </TraySlot>
          <DesktopEdge />
        </Tray>
      </Taskbar>
    </Screen>
  );
};

export default App;
